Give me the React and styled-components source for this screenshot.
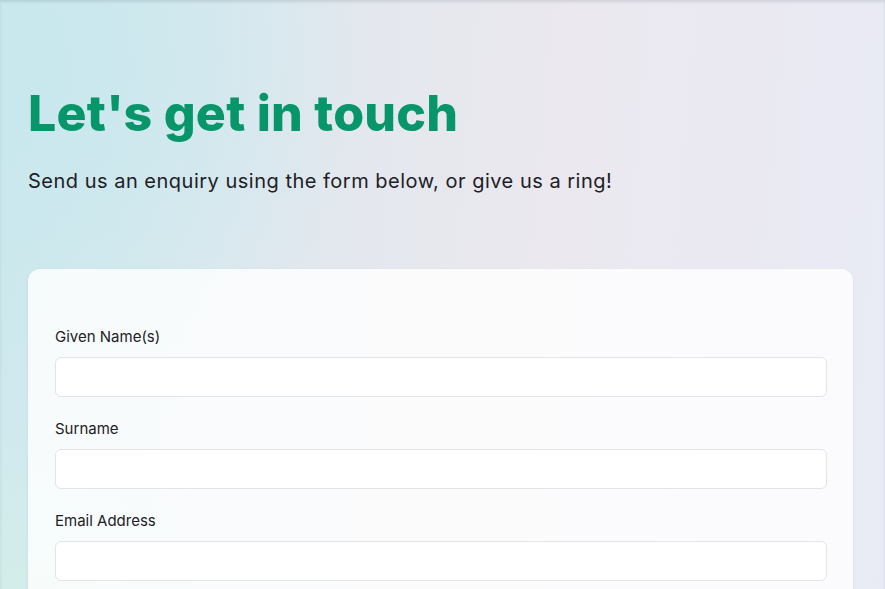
import React from "react";
import styled, { createGlobalStyle } from "styled-components";

const Global = createGlobalStyle`
  html, body { margin: 0; padding: 0; }
  body { font-family: Inter, "Noto Sans", sans-serif; color: #1d2126; }
  * { box-sizing: border-box; }
`;

const Page = styled.div`
  min-height: 100vh;
  background:
    radial-gradient(ellipse 380px 360px at 0% 100%, rgba(212, 240, 230, 0.9), rgba(212, 240, 230, 0) 75%),
    radial-gradient(ellipse 460px 420px at 0% 10%, rgba(200, 232, 238, 1), rgba(200, 232, 238, 0) 80%),
    linear-gradient(95deg, #cde9ee 0%, #e3e8ee 38%, #ebe8ef 60%, #eae9f2 80%, #e8ebf5 100%);
  box-shadow: inset 0 2px 3px rgba(60, 70, 90, 0.14);
  padding: 88px 32px 0 28px;
`;

const Heading = styled.h1`
  margin: 0;
  font-family: Inter, sans-serif;
  font-weight: 800;
  font-size: 50px;
  line-height: 50px;
  letter-spacing: 0.005em;
  color: #07966a;
`;

const Lead = styled.p`
  margin: 29px 0 0;
  font-size: 20px;
  line-height: 28px;
  letter-spacing: 0.5px;
  color: #1d2126;
`;

const Card = styled.form`
  margin-top: 74px;
  background: rgba(255, 255, 255, 0.82);
  border-radius: 12px;
  box-shadow: 0 1px 3px rgba(40, 50, 70, 0.08);
  padding: 58px 26px 20px 27px;
  display: flex;
  flex-direction: column;
  gap: 22px;
`;

const Field = styled.div`
  display: flex;
  flex-direction: column;
  gap: 10px;
`;

const Label = styled.label`
  font-size: 15px;
  line-height: 20px;
  color: #1d2126;
`;

const Input = styled.input`
  height: 40px;
  width: 100%;
  border: 1px solid #e3e4e6;
  border-radius: 6px;
  background: #ffffff;
  font: inherit;
  padding: 0 12px;
  outline: none;
`;

const fields = [
  { id: "given", label: "Given Name(s)", type: "text" },
  { id: "surname", label: "Surname", type: "text" },
  { id: "email", label: "Email Address", type: "email" },
  { id: "phone", label: "Phone Number", type: "tel" },
];

export default function App() {
  return (
    <>
      <Global />
      <Page>
        <Heading>Let's get in touch</Heading>
        <Lead>Send us an enquiry using the form below, or give us a ring!</Lead>
        <Card onSubmit={(e) => e.preventDefault()}>
          {fields.map((f) => (
            <Field key={f.id}>
              <Label htmlFor={f.id}>{f.label}</Label>
              <Input id={f.id} type={f.type} />
            </Field>
          ))}
        </Card>
      </Page>
    </>
  );
}
